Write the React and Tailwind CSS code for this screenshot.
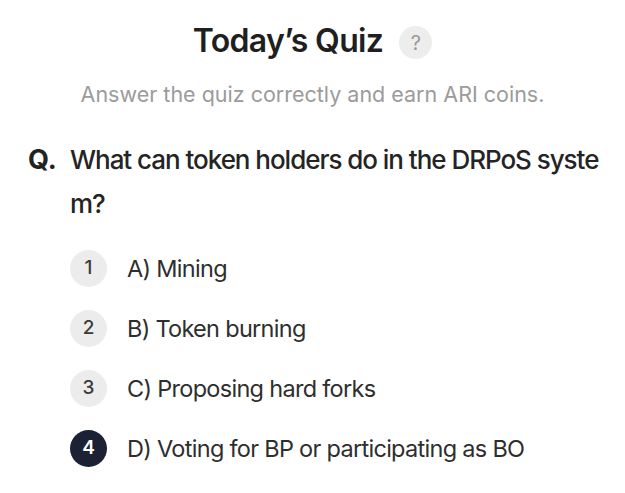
const options = [
  { n: 1, label: "A) Mining" },
  { n: 2, label: "B) Token burning" },
  { n: 3, label: "C) Proposing hard forks" },
  { n: 4, label: "D) Voting for BP or participating as BO", selected: true },
];

function App() {
  return (
    <div
      className="min-h-screen bg-white px-7 pt-[22px]"
      style={{ fontFamily: "Inter, 'Noto Sans', sans-serif" }}
    >
      <div className="flex items-center justify-center">
        <h1 className="text-[32px] leading-[36px] font-semibold tracking-[-0.02em] text-[#1f1f1f]">
          Today’s Quiz
        </h1>
        <div className="ml-4 mt-1 flex h-[33px] w-[33px] items-center justify-center rounded-full bg-[#ededed] text-[20px] text-[#9a9a9a]">
          ?
        </div>
      </div>

      <p className="mt-[21px] text-center text-[21.5px] leading-[28px] text-[#9b9b9b]">
        Answer the quiz correctly and earn ARI coins.
      </p>

      <div className="mt-[30px] flex">
        <span className="w-[42px] shrink-0 text-[27px] leading-[44px] font-bold text-[#222]">
          Q.
        </span>
        <p className="whitespace-nowrap text-[26px] leading-[44px] font-medium tracking-[-0.04em] text-[#242424]">
          What can token holders do in the DRPoS syste
          <br />
          m?
        </p>
      </div>

      <ul className="mt-[24px] ml-[42px] flex flex-col gap-[23px]">
        {options.map((o) => (
          <li key={o.n} className="flex items-center gap-5">
            <span
              className={
                o.selected
                  ? "flex h-[37px] w-[37px] items-center justify-center rounded-full bg-[#1d2134] text-[19px] font-semibold text-white"
                  : "flex h-[37px] w-[37px] items-center justify-center rounded-full bg-[#ececec] text-[19px] font-medium text-[#3a3a3a]"
              }
            >
              {o.n}
            </span>
            <span className="text-[23.5px] leading-[37px] tracking-[-0.03em] text-[#2e2e2e]">
              {o.label}
            </span>
          </li>
        ))}
      </ul>
    </div>
  );
}

export default App;
